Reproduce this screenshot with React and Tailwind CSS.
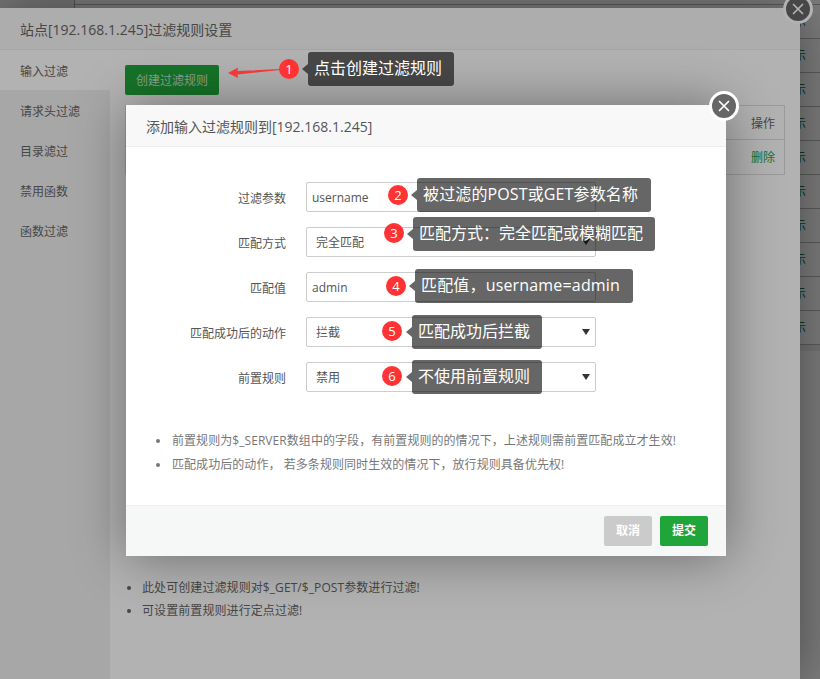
const TABS = ['输入过滤', '请求头过滤', '目录滤过', '禁用函数', '函数过滤']

const FIELDS = [
  { label: '过滤参数', value: 'username', pad: 'pl-[5px]' },
  { label: '匹配方式', value: '完全匹配', pad: 'pl-[9px]', select: true },
  { label: '匹配值', value: 'admin', pad: 'pl-[5px]' },
  { label: '匹配成功后的动作', value: '拦截', pad: 'pl-[9px]', select: true },
  { label: '前置规则', value: '禁用', pad: 'pl-[9px]', select: true },
]

const CALLOUTS = [
  { n: 1, text: '点击创建过滤规则', box: 'left-[308px] top-[52px] w-[146px]', dot: 'left-[279px] top-[59px]' },
  { n: 2, text: '被过滤的POST或GET参数名称', box: 'left-[417px] top-[178px] w-[234px] tracking-[0.13px]', dot: 'left-[388px] top-[185px]' },
  { n: 3, text: '匹配方式：完全匹配或模糊匹配', box: 'left-[413px] top-[217px] w-[242px]', dot: 'left-[384px] top-[223px]' },
  { n: 4, text: '匹配值，username=admin', box: 'left-[415px] top-[269px] w-[218px] tracking-[0.17px]', dot: 'left-[386px] top-[276px]' },
  { n: 5, text: '匹配成功后拦截', box: 'left-[412px] top-[315px] w-[130px]', dot: 'left-[382px] top-[321px]' },
  { n: 6, text: '不使用前置规则', box: 'left-[412px] top-[360px] w-[130px]', dot: 'left-[382px] top-[366px]' },
]

const PAGE_ROWS = [0, 1, 2, 3, 4, 5, 6, 7, 8, 9]

function CloseIcon({ size }) {
  return (
    <svg width={size} height={size} viewBox="0 0 12 12" fill="none" stroke="white" strokeWidth="1.7" strokeLinecap="round">
      <path d="M1.5 1.5l9 9M10.5 1.5l-9 9" />
    </svg>
  )
}

function Callout({ n, text, box, dot }) {
  return (
    <>
      <div className={`absolute ${dot} w-5 h-5 rounded-full bg-[#ff3333] text-white text-[13px] leading-5 text-center`}>{n}</div>
      <div className={`absolute ${box} h-[34px] rounded-[3px] bg-black/60 text-white text-[16px] leading-[33px] pl-[6px] whitespace-nowrap`}>
        <span className="absolute left-[-6px] top-[12px] w-0 h-0 border-y-[5px] border-y-transparent border-r-[6px] border-r-black/60" />
        {text}
      </div>
    </>
  )
}

export default function App() {
  return (
    <div className="relative w-[820px] h-[679px] overflow-hidden bg-white font-['Open_Sans','Noto_Sans_CJK_SC',sans-serif]">
      {/* page behind the dialogs */}
      <div className="pt-[4px]">
        {PAGE_ROWS.map(i => (
          <div key={i} className="h-[34px] border-t border-[#bbb] flex justify-end">
            <span className="w-[20px] overflow-hidden text-[12px] leading-[34px] text-[#187a2b] -indent-[6px]">示</span>
          </div>
        ))}
        <div className="h-[7px] bg-[#f0f0f0] border-t border-[#bbb]" />
      </div>
      <div className="absolute left-0 top-0 w-[75px] h-2 bg-[#eee] border-r border-[#aaa]" />
      <div className="absolute inset-0 bg-black/30" />

      {/* settings dialog */}
      <div className="absolute left-0 top-[8px] w-[800px] h-[671px] bg-white flex flex-col shadow-[1px_1px_50px_rgba(0,0,0,0.4)]">
        <div className="h-[42px] shrink-0 bg-[#f8f8f8] border-b border-[#eee] pl-[20px] text-[14px] leading-[43px] text-[#666]">
          站点[192.168.1.245]过滤规则设置
        </div>
        <div className="flex flex-1 min-h-0">
          <div className="w-[110px] shrink-0 bg-[#f0f0f0] text-[12px] text-[#666]">
            {TABS.map((t, i) => (
              <div key={t} className={`h-10 leading-[43px] pl-[20px] ${i === 0 ? 'bg-white' : ''}`}>{t}</div>
            ))}
          </div>
          <div className="flex-1 pl-[15px] pr-[15px] pt-[15px]">
            <button className="block w-[94px] h-[30px] pt-[2px] rounded-[2px] bg-[#20a53a] text-white/75 text-[12px]">创建过滤规则</button>
            <div className="mt-[10px] border border-[#ddd] text-[12px]">
              <div className="h-[34px] leading-[35px] text-right pr-[9px] text-[#666] border-b border-[#ddd]">操作</div>
              <div className="h-[34px] leading-[35px] text-right pr-[9px] text-[#20a53a]">删除</div>
            </div>
            <ul className="mt-[405px] pl-[2px] text-[12px] tracking-[0.08px] text-[#666] space-y-[7px]">
              <li className="flex items-center h-4"><span className="w-1 h-1 rounded-full bg-[#666] mr-[11px]" />此处可创建过滤规则对$_GET/$_POST参数进行过滤!</li>
              <li className="flex items-center h-4"><span className="w-1 h-1 rounded-full bg-[#666] mr-[11px]" />可设置前置规则进行定点过滤!</li>
            </ul>
          </div>
        </div>
        <div className="absolute right-[-13px] top-[-14px] w-[30px] h-[30px] rounded-full bg-[#666] border-[3px] border-white flex items-center justify-center">
          <CloseIcon size={12} />
        </div>
      </div>
      <div className="absolute inset-0 bg-black/30" />

      {/* add rule dialog */}
      <div className="absolute left-[126px] top-[105px] w-[600px] h-[451px] bg-white flex flex-col shadow-[1px_1px_50px_rgba(0,0,0,0.4)]">
        <div className="h-[42px] shrink-0 bg-[#f8f8f8] border-b border-[#eee] pl-[20px] text-[14px] leading-[43px] text-[#555]">
          添加输入过滤规则到[192.168.1.245]
        </div>
        <div className="flex-1 pt-[35px]">
          <div className="flex flex-col gap-[15px]">
            {FIELDS.map(f => (
              <div key={f.label} className="flex items-center h-[30px]">
                <div className="w-[160px] pt-[3px] text-right text-[12px] text-[#555]">{f.label}</div>
                <div className={`ml-[20px] w-[290px] h-[30px] rounded-[2px] border border-[#ccc] ${f.pad} pr-[5px] pt-[2px] text-[12px] leading-[28px] text-[#555] flex justify-between items-center`}>
                  <span>{f.value}</span>
                  {f.select && <span className="w-0 h-0 -mt-[2px] border-x-[4px] border-x-transparent border-t-[6px] border-t-[#333]" />}
                </div>
              </div>
            ))}
          </div>
          <ul className="mt-[41px] pl-[30px] text-[12px] tracking-[0.06px] text-[#777] space-y-2">
            <li className="flex items-center h-4"><span className="w-[4px] h-[4px] rounded-full bg-[#777] mr-[12px]" />前置规则为$_SERVER数组中的字段，有前置规则的的情况下，上述规则需前置匹配成立才生效!</li>
            <li className="flex items-center h-4"><span className="w-[4px] h-[4px] rounded-full bg-[#777] mr-[12px]" />匹配成功后的动作， 若多条规则同时生效的情况下，放行规则具备优先权!</li>
          </ul>
        </div>
        <div className="h-[51px] shrink-0 bg-[#f6f8f8] border-t border-[#eee] flex items-center justify-end gap-2 pr-[18px]">
          <button className="w-[48px] h-[30px] rounded-[2px] bg-[#cbcbcb] text-white text-[12px] font-bold">取消</button>
          <button className="w-[48px] h-[30px] rounded-[2px] bg-[#20a53a] text-white text-[12px] font-bold">提交</button>
        </div>
        <div className="absolute right-[-13px] top-[-14px] w-[30px] h-[30px] rounded-full bg-[#666] border-[3px] border-white flex items-center justify-center">
          <CloseIcon size={12} />
        </div>
      </div>

      {/* annotations on top of the screenshot */}
      <svg className="absolute left-[226px] top-[62px]" width="56" height="16" viewBox="0 0 56 16">
        <path d="M2 11L12 5.5L11.5 9L54 7L54 8L11.5 12.5L12 16Z" fill="#f03a3a" />
      </svg>
      {CALLOUTS.map(c => <Callout key={c.n} {...c} />)}
    </div>
  )
}
